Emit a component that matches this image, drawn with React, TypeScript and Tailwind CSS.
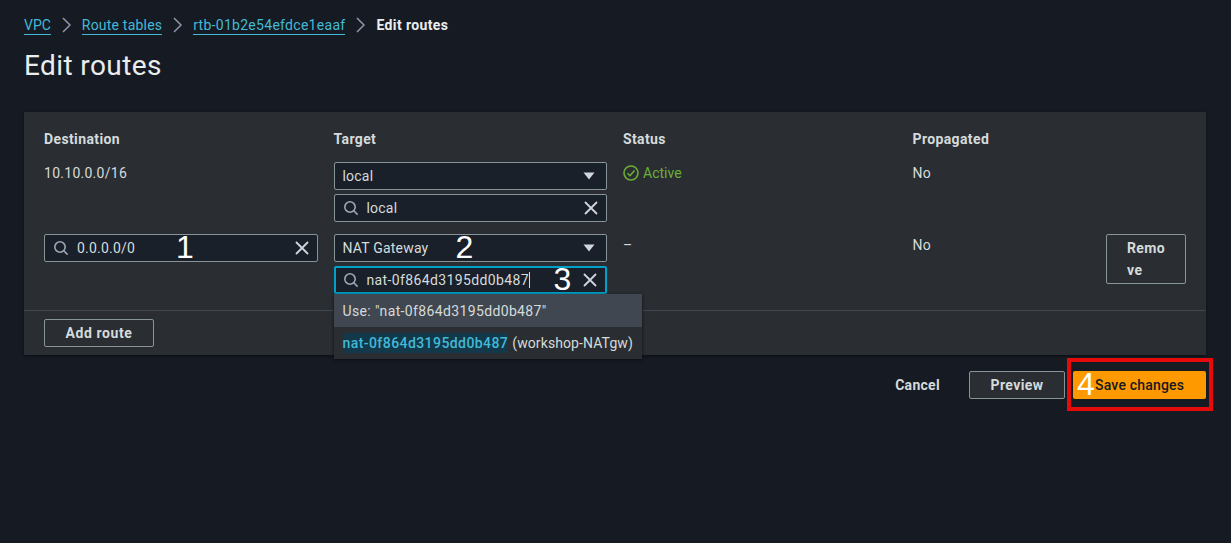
import React from "react";

const Search = () => (
  <svg width="16" height="16" viewBox="0 0 16 16" fill="none" stroke="#9ba7b6" strokeWidth="1.6" className="shrink-0">
    <circle cx="7" cy="7" r="5.2" />
    <path d="M10.8 10.8 L14.6 14.6" />
  </svg>
);

const Close = ({ size = 14 }: { size?: number }) => (
  <svg width={size} height={size} viewBox="0 0 14 14" fill="none" stroke="#d1d5db" strokeWidth="1.8" className="shrink-0">
    <path d="M1 1 L13 13 M13 1 L1 13" />
  </svg>
);

const Caret = () => (
  <svg width="12" height="8" viewBox="0 0 12 8" className="shrink-0">
    <path d="M0.5 0.5 H11.5 L6 7.5 Z" fill="#d1d5db" />
  </svg>
);

const Chevron = () => (
  <svg width="9" height="16" viewBox="0 0 9 16" fill="none" stroke="#8d99a8" strokeWidth="1.5">
    <path d="M1 1 L8 8 L1 15" />
  </svg>
);

const Sel = ({ label, children }: { label: string; children?: React.ReactNode }) => (
  <div className="relative flex h-[28px] w-[273px] items-center justify-between rounded-[2px] border border-[#879596] bg-[#1a2029] pl-[8px] pr-[11px] text-[#d5dbdb]">
    <span>{label}</span>
    <Caret />
    {children}
  </div>
);

const Inp = ({ value, w = "w-[273px]", focus, children }: { value: React.ReactNode; w?: string; focus?: boolean; children?: React.ReactNode }) => (
  <div
    className={`relative flex h-[28px] ${w} items-center rounded-[2px] bg-[#1a2029] pr-[8px] text-[#d5dbdb] ${
      focus ? "border-2 border-[#00a1c9] pl-[7px]" : "border border-[#879596] pl-[8px]"
    }`}
  >
    <Search />
    <span className="ml-[8px] grow">{value}</span>
    <Close />
    {children}
  </div>
);

const Num = ({ n, className }: { n: string; className: string }) => (
  <span className={`absolute text-[32px] leading-none tracking-normal text-white ${className}`} style={{ fontFamily: '"Liberation Sans", sans-serif' }}>
    {n}
  </span>
);

const Btn = ({ className, children }: { className: string; children: React.ReactNode }) => (
  <div className={`flex items-center justify-center rounded-[2px] border border-[#879596] font-bold tracking-[0.38px] text-[#d5dbdb] ${className}`}>{children}</div>
);

const LINK = "border-b border-[#44b9d6] leading-[18px] text-[#44b9d6]";

export default function App() {
  return (
    <div
      className="h-[543px] w-[1231px] overflow-hidden bg-[#161a23] px-[24px] pt-[15px] text-[14px] leading-[20px] tracking-[0.2px] text-[#d5dbdb]"
      style={{ fontFamily: 'Roboto, "Noto Sans", sans-serif' }}
    >
      <nav className="flex h-[20px] items-center">
        <a className={`${LINK} tracking-normal`}>VPC</a>
        <span className="mx-[11px]"><Chevron /></span>
        <a className={LINK}>Route tables</a>
        <span className="mx-[11px]"><Chevron /></span>
        <a className={`${LINK} tracking-[0.29px]`}>rtb-01b2e54efdce1eaaf</a>
        <span className="mx-[11px]"><Chevron /></span>
        <span className="font-bold tracking-[0.38px] text-[#eaeded]">Edit routes</span>
      </nav>
      <h1 className="mt-[13px] text-[28px] leading-[36px] tracking-[0.4px] text-[#eaeded]">Edit routes</h1>

      <section className="mt-[28px] h-[243px] w-[1182px] bg-[#2a2e33] shadow-[0_1px_2px_#0b0d12]">
        <div className="h-[198px] px-[20px] pt-[17px]">
          <div className="grid grid-cols-[289.5px_289.5px_289.5px_1fr] font-bold tracking-[0.38px]">
            <div>Destination</div>
            <div>Target</div>
            <div>Status</div>
            <div>Propagated</div>
          </div>
          <div className="mt-[13px] grid grid-cols-[289.5px_289.5px_289.5px_1fr]">
            <div className="pt-[1px] tracking-[0.27px]">10.10.0.0/16</div>
            <div className="flex flex-col gap-[4px]">
              <Sel label="local" />
              <Inp value="local" />
            </div>
            <div className="flex items-start gap-[4px] pt-[1px] tracking-normal text-[#6aaf35]">
              <svg width="16" height="16" viewBox="0 0 16 16" fill="none" stroke="#6aaf35" strokeWidth="1.6" className="mt-[2px]">
                <circle cx="8" cy="8" r="7" />
                <path d="M4.5 8.2 L7 10.7 L11.5 5.5" />
              </svg>
              <span>Active</span>
            </div>
            <div className="pt-[1px]">No</div>
          </div>
          <div className="relative mt-[12px] grid grid-cols-[289.5px_289.5px_289.5px_1fr]">
            <div>
              <Inp value="0.0.0.0/0" w="w-[274px]">
                <Num n="1" className="left-[131px] top-[-4px]" />
              </Inp>
            </div>
            <div className="relative flex flex-col gap-[4px]">
              <Sel label="NAT Gateway">
                <Num n="2" className="left-[121px] top-[-4px]" />
              </Sel>
              <Inp
                focus
                value={
                  <span className="border-r border-[#d5dbdb] tracking-[0.38px]">nat-0f864d3195dd0b487</span>
                }
              >
                <Num n="3" className="left-[218px] top-[-5px]" />
              </Inp>
              <div className="absolute left-0 top-[60px] z-10 w-[308px] bg-[#2a2e33] shadow-[0_1px_3px_#0b0d12]">
                <div className="flex h-[33px] items-center bg-[#414750] pl-[9px] tracking-[0.36px]">Use: "nat-0f864d3195dd0b487"</div>
                <div className="flex h-[32px] items-center whitespace-nowrap pb-[1px] pl-[9px]">
                  <span className="bg-[#12384a] font-medium tracking-[0.43px] text-[#44b9d6]">nat-0f864d3195dd0b487</span>
                  <span className="ml-[4px] tracking-[0.1px]">(workshop-NATgw)</span>
                </div>
              </div>
            </div>
            <div className="pt-[1px]">–</div>
            <div className="flex justify-between pt-[1px]">
              <span>No</span>
              <Btn className="mt-[-1px] h-[50px] w-[80px] flex-col !items-start pl-[20px] leading-[22px]">
                <span>Remo</span>
                <span>ve</span>
              </Btn>
            </div>
          </div>
        </div>
        <div className="border-t border-[#414750] px-[20px] pt-[8px]">
          <Btn className="h-[28px] w-[110px] !tracking-[0.6px]">Add route</Btn>
        </div>
      </section>

      <div className="relative mt-[16px] flex h-[28px] w-[1182px] items-center justify-end">
        <span className="mr-[29px] font-bold tracking-[0.3px]">Cancel</span>
        <Btn className="mr-[8px] h-[28px] w-[96px] bg-[#2a2e33]">Preview</Btn>
        <div className="flex h-[28px] w-[133px] items-center rounded-[2px] bg-[#ff9900] pl-[22px] font-medium text-[#16191f]">
          Save changes
        </div>
        <Num n="4" className="left-[1053px] top-[-3px]" />
        <div className="absolute left-[1043px] top-[-13px] h-[53px] w-[146px] border-[4px] border-[#e60a0a]" />
      </div>
    </div>
  );
}
